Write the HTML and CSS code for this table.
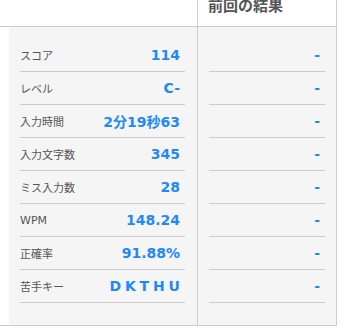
FILE: index.html
```html
<!DOCTYPE html>
<html lang="ja">
<head>
<meta charset="UTF-8" />
<meta name="viewport" content="width=device-width, initial-scale=1.0" />
<title>結果</title>
<link rel="stylesheet" href="styles.css">
</head>
<body>
<div class="board">
    <div class="head">
    <div class="head-now"></div>
    <div class="head-prev">前回の結果</div>
    </div>

    <div class="body">
    <div class="gutter"></div>

    <div class="col col-now">
        <div class="row"><span class="label">スコア</span><span class="value">114</span></div>
        <div class="row"><span class="label">レベル</span><span class="value">C-</span></div>
        <div class="row"><span class="label">入力時間</span><span class="value">2分19秒63</span></div>
        <div class="row"><span class="label">入力文字数</span><span class="value">345</span></div>
        <div class="row"><span class="label">ミス入力数</span><span class="value">28</span></div>
        <div class="row"><span class="label">WPM</span><span class="value">148.24</span></div>
        <div class="row"><span class="label">正確率</span><span class="value">91.88%</span></div>
        <div class="row"><span class="label">苦手キー</span><span class="value keys">D K T H U</span></div>
    </div>

    <div class="col col-prev">
        <div class="row"><span class="value">-</span></div>
        <div class="row"><span class="value">-</span></div>
        <div class="row"><span class="value">-</span></div>
        <div class="row"><span class="value">-</span></div>
        <div class="row"><span class="value">-</span></div>
        <div class="row"><span class="value">-</span></div>
        <div class="row"><span class="value">-</span></div>
        <div class="row"><span class="value">-</span></div>
    </div>
    </div>
</div>
</body>
</html>
```

FILE: styles.css
```css
:root {
--line: #cccccc;
--panel: #f5f5f5;
--label: #555555;
--accent: #1e88ff;
}

body {
margin: 0;
background: #ffffff;
font-family: "DejaVu Sans", "Noto Sans CJK JP", sans-serif;
}

.board {
width: 336px;
border-right: 1px solid var(--line);
border-bottom: 1px solid var(--line);
}

.head {
display: flex;
height: 26px;
border-bottom: 1px solid var(--line);
overflow: hidden;
}

.head-now {
width: 197px;
}

.head-prev {
flex: 1;
border-left: 1px solid var(--line);
padding-left: 10px;
margin-top: -3px;
font-family: "Noto Sans CJK JP", sans-serif;
font-size: 15px;
font-weight: bold;
line-height: 15px;
color: var(--label);
}

.body {
display: flex;
}

.gutter {
width: 9px;
}

.col {
background: var(--panel);
padding: 12px 11px 22px 11px;
}

.col-now {
width: 188px;
box-sizing: border-box;
padding-right: 12px;
}

.col-prev {
flex: 1;
border-left: 1px solid var(--line);
}

.row {
display: flex;
align-items: center;
justify-content: space-between;
height: 32px;
border-bottom: 1px solid var(--line);
}

.col-prev .row {
justify-content: flex-end;
}

.label {
font-size: 11px;
color: var(--label);
}

.value {
padding-right: 5px;
font-size: 14px;
font-weight: bold;
color: var(--accent);
}

.keys {
word-spacing: -1px;
}
```
